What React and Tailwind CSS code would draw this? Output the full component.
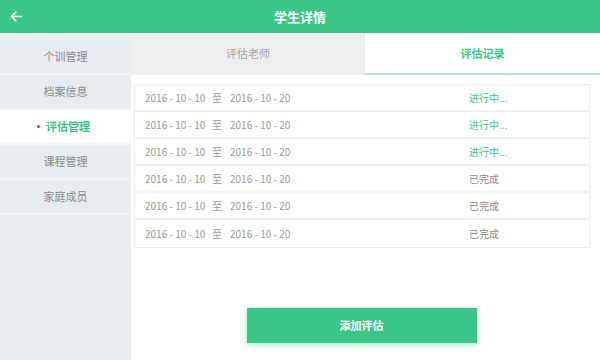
import React from 'react';

const menu = ['个训管理', '档案信息', '评估管理', '课程管理', '家庭成员'];

const records = [
  { from: '2016 - 10 - 10', to: '2016 - 10 - 20', status: '进行中...', done: false },
  { from: '2016 - 10 - 10', to: '2016 - 10 - 20', status: '进行中...', done: false },
  { from: '2016 - 10 - 10', to: '2016 - 10 - 20', status: '进行中...', done: false },
  { from: '2016 - 10 - 10', to: '2016 - 10 - 20', status: '已完成', done: true },
  { from: '2016 - 10 - 10', to: '2016 - 10 - 20', status: '已完成', done: true },
  { from: '2016 - 10 - 10', to: '2016 - 10 - 20', status: '已完成', done: true },
];

const App = () => {
  return (
    <div
      className="w-[600px] h-[360px] flex flex-col overflow-hidden bg-white"
      style={{ fontFamily: '"Noto Sans CJK SC", "Noto Sans", sans-serif' }}
    >
      {/* header */}
      <div className="h-[33px] shrink-0 bg-[#3bc688] grid grid-cols-[40px_1fr_40px] items-center shadow-[0_1px_2px_rgba(0,0,0,0.08)]">
        <div className="pl-[9px] flex items-center">
          <svg width="15" height="15" viewBox="0 0 24 24" fill="none" stroke="white" strokeWidth="2.6" strokeLinecap="round" strokeLinejoin="round">
            <path d="M20 12H4" />
            <path d="M11 5l-7 7 7 7" />
          </svg>
        </div>
        <div className="text-center text-white text-[13px] font-bold">学生详情</div>
        <div />
      </div>

      <div className="flex flex-1">
        {/* sidebar */}
        <div className="w-[131px] shrink-0 bg-[#e8ebef] flex flex-col">
          <div className="h-[7px] bg-[#eef0f3]" />
          {menu.map((item, i) => (
            <div
              key={item}
              className={
                i === 2
                  ? 'h-[35px] flex items-center justify-center bg-white border-b-2 border-[#f1f2f5]'
                  : 'h-[35px] flex items-center justify-center border-b-2 border-[#f1f2f5]'
              }
            >
              {i === 2 ? (
                <span className="flex items-center text-[11px] font-bold text-[#35c384] -ml-[4px]">
                  <span className="w-[3px] h-[3px] rounded-full bg-[#f03a2a] mr-[6px]" />
                  {item}
                </span>
              ) : (
                <span className="text-[11px] text-[#8a8a8a]">{item}</span>
              )}
            </div>
          ))}
        </div>

        {/* main */}
        <div className="flex-1 flex flex-col">
          <div className="h-[42px] flex">
            <div className="w-[234px] bg-[#efefef] flex items-center justify-center text-[11px] text-[#a0a0a0] pb-[2px]">
              评估老师
            </div>
            <div className="flex-1 bg-white flex items-center justify-center text-[11px] font-bold text-[#35c384] border-b-2 border-[#b2eacf]">
              评估记录
            </div>
          </div>

          <div className="ml-[3px] mt-[9px] w-[456px] border border-[#ececec]">
            {records.map((r, i) => (
              <div
                key={i}
                className={
                  i === records.length - 1
                    ? 'h-[27px] flex items-center text-[10px]'
                    : 'h-[27px] flex items-center text-[10px] border-b-2 border-[#f0f0f0]'
                }
              >
                <span className="ml-[10px] w-[67px] text-[#9a9a9a]">{r.from}</span>
                <span className="w-[18px] text-[#9a9a9a]">至</span>
                <span className="w-[239px] text-[#9a9a9a]">{r.to}</span>
                <span className={r.done ? 'text-[#8a8a8a]' : 'text-[#3cc488]'}>{r.status}</span>
              </div>
            ))}
          </div>

          <div className="flex justify-center mt-[60px] pr-[8px]">
            <button className="w-[230px] h-[35px] bg-[#3bc688] text-white text-[11px] font-bold shadow-[0_2px_6px_rgba(59,198,136,0.45)]">
              添加评估
            </button>
          </div>
        </div>
      </div>
    </div>
  );
};

export default App;
